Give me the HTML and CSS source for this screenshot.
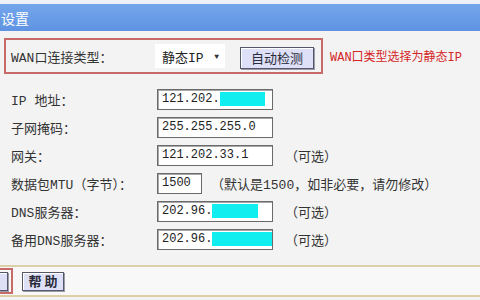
FILE: index.html
```html
<!DOCTYPE html>
<html lang="zh-CN">
<head>
  <meta charset="UTF-8">
  <meta name="viewport" content="width=device-width, initial-scale=1.0">
  <title>WAN口设置</title>
  <link rel="stylesheet" href="styles.css">
</head>
<body>
  <div class="top-strip"></div>
  <div class="title-bar"><span class="title">设置</span></div>

  <div class="wan-line">
    <div class="wan-box">
      <span class="label wan-label">WAN口连接类型：</span>
      <div class="select"><span>静态IP</span><span class="arrow">▼</span></div>
      <button class="btn detect">自动检测</button>
    </div>
    <span class="note">WAN口类型选择为静态IP</span>
  </div>

  <div class="form">
    <div class="row">
      <span class="label">IP 地址：</span>
      <div class="field wide">121.202.<span class="mask mask-ip"></span></div>
    </div>
    <div class="row">
      <span class="label">子网掩码：</span>
      <div class="field wide">255.255.255.0</div>
    </div>
    <div class="row">
      <span class="label">网关：</span>
      <div class="field wide">121.202.33.1</div>
      <span class="hint">（可选）</span>
    </div>
    <div class="row">
      <span class="label">数据包MTU（字节）：</span>
      <div class="field short">1500</div>
      <span class="hint mtu-hint">（默认是1500，如非必要，请勿修改）</span>
    </div>
    <div class="row">
      <span class="label">DNS服务器：</span>
      <div class="field wide">202.96.<span class="mask mask-dns"></span></div>
      <span class="hint">（可选）</span>
    </div>
    <div class="row">
      <span class="label">备用DNS服务器：</span>
      <div class="field wide">202.96.<span class="mask mask-dns2"></span></div>
      <span class="hint">（可选）</span>
    </div>
  </div>

  <div class="footer">
    <div class="save-wrap"><button class="btn save" aria-label="保存"></button></div>
    <button class="btn help">帮 助</button>
  </div>
</body>
</html>
```

FILE: styles.css
```css
/* 路由器 WAN 口设置页 */
* {
  margin: 0;
  padding: 0;
  box-sizing: border-box;
}

body {
  width: 480px;
  height: 300px;
  overflow: hidden;
  background-color: #f3f3f3;
  color: #333;
  font-family: "Liberation Mono", "Noto Sans CJK SC", monospace;
  font-size: 13px;
}

.top-strip {
  height: 4px;
  background-color: #eef1f6;
}

.title-bar {
  height: 27px;
  background: linear-gradient(#74a6ec, #5f93e2);
  display: flex;
  align-items: center;
}

.title {
  margin-left: 1px;
  color: #ffffff;
  font-family: "Noto Sans CJK SC", sans-serif;
  font-size: 14px;
}

/* WAN 连接类型 */
.wan-line {
  display: flex;
  align-items: center;
  margin-top: 7px;
  margin-left: 4px;
}

.wan-box {
  width: 319px;
  height: 36px;
  border: 2px solid #c66a6a;
  display: flex;
  align-items: center;
  padding-left: 5px;
}

.wan-label {
  width: 144px;
}

.select {
  width: 70px;
  height: 24px;
  background-color: #ffffff;
  display: flex;
  align-items: center;
  justify-content: space-between;
  padding: 0 6px 0 7px;
  color: #222;
}

.arrow {
  font-size: 8px;
  color: #333;
}

.btn {
  font-family: "Noto Sans CJK SC", sans-serif;
  font-size: 13px;
  color: #2a2a3a;
  background-color: #dde0f6;
  border: 1px solid #55586a;
  box-shadow: inset 1px 1px 0 #ffffff, 1px 1px 0 #9a9aa8;
  cursor: pointer;
}

.detect {
  width: 74px;
  height: 22px;
  margin-left: 15px;
  margin-top: 4px;
  line-height: 18px;
}

.note {
  margin-left: 7px;
  color: #d42626;
  font-size: 12px;
}

/* 表单 */
.form {
  margin-top: 11px;
  padding-left: 11px;
}

.row {
  height: 28px;
  display: flex;
  align-items: center;
}

.row .label {
  width: 146px;
}

.field {
  height: 21px;
  background-color: #ffffff;
  border: 1px solid #6a6a6a;
  box-shadow: inset 1px 1px 0 #a8a8a8;
  display: flex;
  align-items: center;
  padding-left: 4px;
  font-size: 12px;
  color: #222;
}

.wide {
  width: 116px;
}

.short {
  width: 45px;
}

.mask {
  height: 14px;
  background-color: #10eef0;
}

.mask-ip {
  width: 45px;
}

.mask-dns {
  width: 46px;
}

.mask-dns2 {
  width: 60px;
}

.hint {
  margin-left: 12px;
  color: #333;
}

.mtu-hint {
  margin-left: 9px;
}

/* 底部按钮 */
.footer {
  margin-top: 12px;
  height: 32px;
  border-top: 2px solid #dcd0a8;
  border-bottom: 2px solid #dcd0a8;
  background-color: #f8f8f8;
  display: flex;
  align-items: center;
}

.save-wrap {
  margin-left: -36px;
  width: 49px;
  height: 26px;
  border: 2px solid #c66a6a;
  display: flex;
  align-items: center;
}

.save {
  width: 40px;
  height: 19px;
  margin-left: 2px;
}

.help {
  width: 42px;
  height: 19px;
  margin-left: 9px;
  line-height: 16px;
  font-weight: bold;
}
```
